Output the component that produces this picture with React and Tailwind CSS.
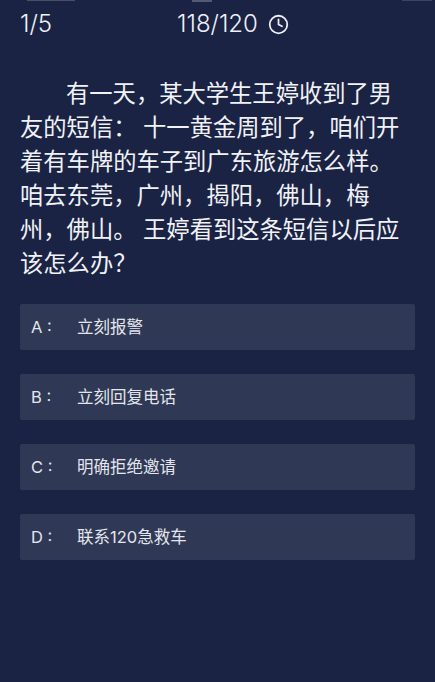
import { Clock } from 'lucide-react';

const options = [
    { key: 'A', text: '立刻报警' },
    { key: 'B', text: '立刻回复电话' },
    { key: 'C', text: '明确拒绝邀请' },
    { key: 'D', text: '联系120急救车' },
];

const fontStack = "font-['Inter','Noto_Sans_CJK_SC',sans-serif]";

// only the bottom edge of the phone status bar is left in the picture
function StatusBar() {
    return (
        <div className="flex h-[3px] items-start overflow-hidden pl-[27px] pr-[3px]">
            <div className="h-[1px] w-[48px] bg-white/20" />
            <div className="ml-[117px] h-[2px] w-[20px] bg-white/25" />
            <div className="ml-auto h-[1px] w-[30px] bg-white/15" />
        </div>
    );
}

export default function App() {
    return (
        <div className={`flex h-[682px] w-[435px] flex-col overflow-hidden bg-[#1a2344] text-white ${fontStack}`}>
            <StatusBar />

            <div className="mt-[8px] flex h-[26px] items-center pl-5 text-[24px] font-light leading-none text-[#eef0f5]">
                <span className="w-[157px]">1/5</span>
                <span>118/120</span>
                <Clock size={21} strokeWidth={2} className="ml-[10px]" />
            </div>

            <p className="mt-[40px] w-[395px] self-center text-[23.3px] leading-[34px] text-[#f1f2f6] [text-indent:46px]">
                有一天，某大学生王婷收到了男
                <br />
                友的短信： 十一黄金周到了，咱们开
                <br />
                着有车牌的车子到广东旅游怎么样。
                <br />
                咱去东莞，广州，揭阳，佛山，梅
                <br />
                州，佛山。 王婷看到这条短信以后应
                <br />
                该怎么办？
            </p>

            <div className="mt-[23px] flex flex-col gap-[24px] px-5">
                {options.map((option) => (
                    <div
                        key={option.key}
                        className="flex h-[46px] items-center rounded-[2px] bg-[#2f3854] pl-[11px] text-[16.5px] text-[#e3e6ee]"
                    >
                        <span className="w-[46px] whitespace-pre">{option.key} :</span>
                        <span>{option.text}</span>
                    </div>
                ))}
            </div>
        </div>
    );
}
